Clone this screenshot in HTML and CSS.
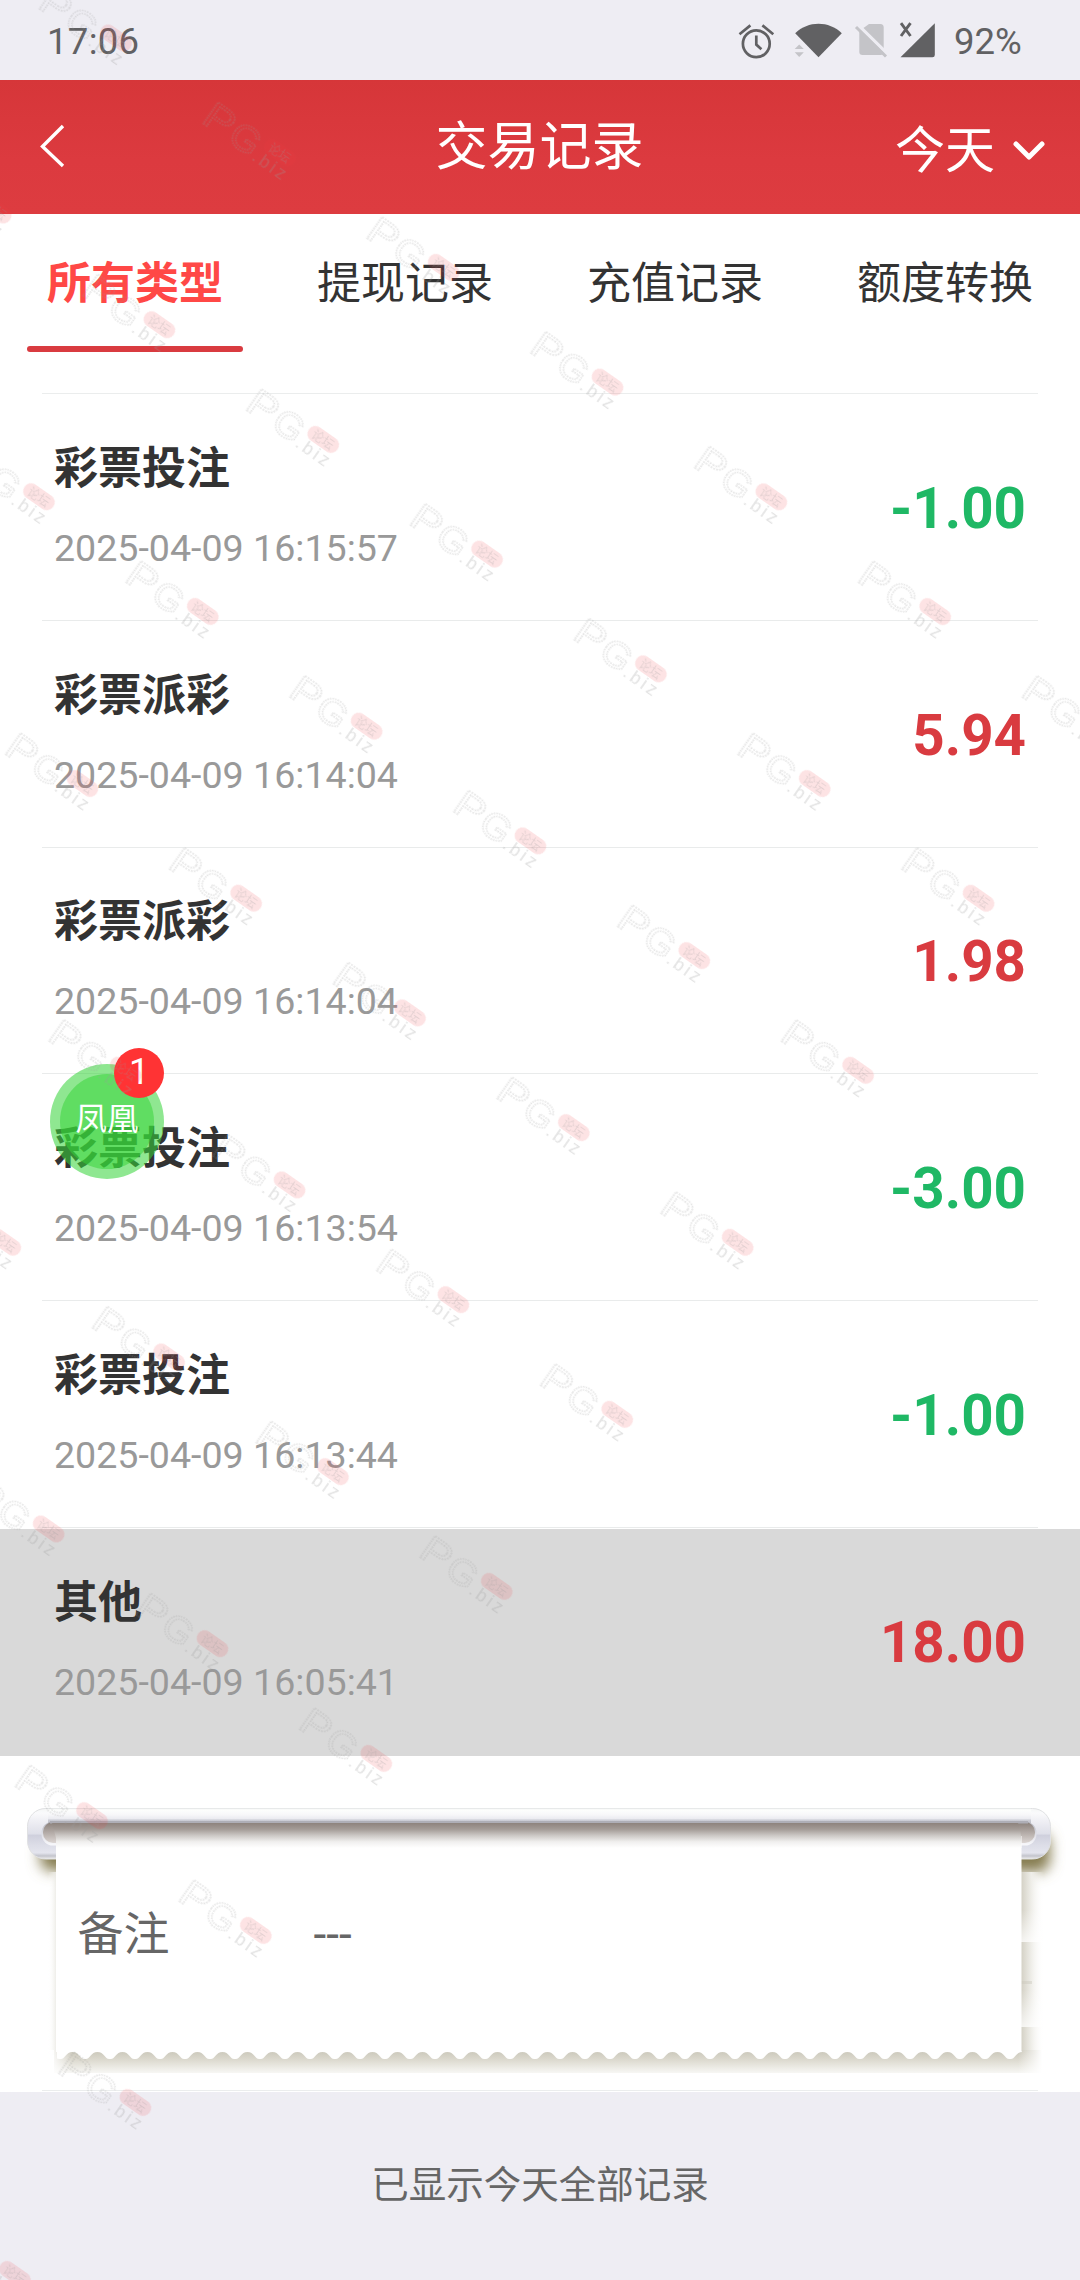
FILE: index.html
```html
<!DOCTYPE html>
<html lang="zh-CN">
<head>
<meta charset="utf-8">
<title>交易记录</title>
<link rel="stylesheet" href="styles.css">
</head>
<body>
<div class="screen">
  <div class="status">
    <span class="clock">17:06</span>
    <svg class="status-icons" width="205" height="80" viewBox="735 0 205 80">
      <g fill="none" stroke="#616163" stroke-width="2.7">
        <circle cx="755.3" cy="43.8" r="13.4"/>
        <path d="M738.5 34.2L749.4 25.4M772.3 34.2L761.4 25.4"/>
        <path d="M755.3 35.5V44.6L760.4 49.2"/>
      </g>
      <path fill="#616163" d="M817.5 57.3L794.2 33.3C807 20.6 828 20.6 840.8 33.3Z"/>
      <path fill="#c4c4c8" d="M798.2 44.5L802.8 49H793.7ZM793.7 52.3H802.8L798.2 57Z"/>
      <path fill="#c4c4c8" d="M868 24H879.5Q882.7 24 882.7 27.5V52Q882.7 55 879.5 55H861.5Q858.3 55 858.3 52V31Z"/>
      <path stroke="#eeedf3" stroke-width="3.5" d="M857 25L887 54.5"/>
      <path stroke="#c4c4c8" stroke-width="3" d="M855 27L885 56.5"/>
      <path fill="#616163" d="M933.8 23.3V55Q933.8 57.3 931.5 57.3H899.5Z"/>
      <path fill="none" stroke="#616163" stroke-width="2.9" d="M900 23.2L909.5 36M909.5 23.2L900 36"/>
    </svg>
    <span class="battery">92%</span>
  </div>

  <header class="header">
    <svg class="back" width="25" height="44" viewBox="0 0 25 44"><path d="M23 2L2.5 22.5L23 42" fill="none" stroke="#fff" stroke-width="3.4"/></svg>
    <h1 class="title">交易记录</h1>
    <div class="period"><span>今天</span><svg width="34" height="22" viewBox="0 0 34 22"><path d="M4 4L17 17L30 4" fill="none" stroke="#fff" stroke-width="5" stroke-linecap="round" stroke-linejoin="round"/></svg></div>
  </header>

  <nav class="tabs">
    <div class="tab active">所有类型</div>
    <div class="tab">提现记录</div>
    <div class="tab">充值记录</div>
    <div class="tab">额度转换</div>
  </nav>
  <div class="list-top"></div>

  <div class="list">
    <div class="row"><div class="row-in"><div><div class="name">彩票投注</div><div class="time">2025-04-09 16:15:57</div></div><div class="amount out">-1.00</div></div></div>
    <div class="row"><div class="row-in"><div><div class="name">彩票派彩</div><div class="time">2025-04-09 16:14:04</div></div><div class="amount">5.94</div></div></div>
    <div class="row"><div class="row-in"><div><div class="name">彩票派彩</div><div class="time">2025-04-09 16:14:04</div></div><div class="amount">1.98</div></div></div>
    <div class="row"><div class="row-in"><div><div class="name">彩票投注</div><div class="time">2025-04-09 16:13:54</div></div><div class="amount out">-3.00</div></div></div>
    <div class="row"><div class="row-in"><div><div class="name">彩票投注</div><div class="time">2025-04-09 16:13:44</div></div><div class="amount out">-1.00</div></div></div>
    <div class="row open"><div class="row-in"><div><div class="name">其他</div><div class="time">2025-04-09 16:05:41</div></div><div class="amount">18.00</div></div></div>
  </div>

  <section class="ticket">
    <svg class="ticket-art" width="1080" height="334" viewBox="0 1756 1080 334">
      <defs>
        <linearGradient id="bar" x1="0" y1="1808" x2="0" y2="1859" gradientUnits="userSpaceOnUse">
          <stop offset="0" stop-color="#f4f6f5"/><stop offset=".1" stop-color="#fafafc"/><stop offset=".3" stop-color="#ececf2"/>
          <stop offset=".5" stop-color="#dfe0e9"/><stop offset=".54" stop-color="#cfd0dd"/><stop offset=".72" stop-color="#dcdde7"/><stop offset=".88" stop-color="#e4e5ee"/><stop offset=".94" stop-color="#c3c4cc"/><stop offset="1" stop-color="#eeeeee"/>
        </linearGradient>
        <linearGradient id="rail" x1="0" y1="1808" x2="0" y2="1824" gradientUnits="userSpaceOnUse">
          <stop offset="0" stop-color="#e9edeb"/><stop offset=".12" stop-color="#fdfefd"/><stop offset=".4" stop-color="#f8f8fa"/><stop offset=".68" stop-color="#ebebf1"/><stop offset=".74" stop-color="#cfd0d8"/><stop offset="1" stop-color="#b9bac3"/>
        </linearGradient>
        <linearGradient id="slot" x1="0" y1="1823" x2="0" y2="1848" gradientUnits="userSpaceOnUse">
          <stop offset="0" stop-color="#8d837d"/><stop offset=".25" stop-color="#a39b96"/><stop offset=".5" stop-color="#ccc8c5"/><stop offset=".75" stop-color="#f0efee"/><stop offset="1" stop-color="#fff"/>
        </linearGradient>
        <linearGradient id="hole" x1="0" y1="1823" x2="0" y2="1844" gradientUnits="userSpaceOnUse">
          <stop offset="0" stop-color="#8d837d"/><stop offset="1" stop-color="#e0dad8"/>
        </linearGradient>
        <linearGradient id="rim" x1="0" y1="1822" x2="0" y2="1845" gradientUnits="userSpaceOnUse">
          <stop offset="0" stop-color="#b9bac3"/><stop offset=".5" stop-color="#dcdde5"/><stop offset="1" stop-color="#f8f8fb"/>
        </linearGradient>
        <linearGradient id="side" x1="1021" y1="0" x2="1044" y2="0" gradientUnits="userSpaceOnUse">
          <stop offset="0" stop-color="#d3d0c4"/><stop offset=".45" stop-color="#efeee9"/><stop offset="1" stop-color="#fff" stop-opacity="0"/>
        </linearGradient>
        <linearGradient id="fade" x1="0" y1="0" x2="0" y2="1">
          <stop offset="0" stop-color="#fff" stop-opacity="0"/><stop offset="1" stop-color="#fff" stop-opacity=".75"/>
        </linearGradient>
        <linearGradient id="drop" x1="0" y1="2050" x2="0" y2="2073" gradientUnits="userSpaceOnUse">
          <stop offset="0" stop-color="#c9c6b8"/><stop offset=".4" stop-color="#dbd8cd"/><stop offset="1" stop-color="#f7f7f4"/>
        </linearGradient>
        <linearGradient id="corner" x1="1018" y1="0" x2="1042" y2="0" gradientUnits="userSpaceOnUse">
          <stop offset="0" stop-color="#fff" stop-opacity="0"/><stop offset="1" stop-color="#fff"/>
        </linearGradient>
        <linearGradient id="left-corner" x1="50" y1="0" x2="72" y2="0" gradientUnits="userSpaceOnUse">
          <stop offset="0" stop-color="#fff"/><stop offset="1" stop-color="#fff" stop-opacity="0"/>
        </linearGradient>
        <linearGradient id="left" x1="48" y1="0" x2="57" y2="0" gradientUnits="userSpaceOnUse">
          <stop offset="0" stop-color="#fff" stop-opacity="0"/><stop offset="1" stop-color="#eae9e3"/>
        </linearGradient>
        <filter id="soft" x="-50%" y="-50%" width="200%" height="220%"><feGaussianBlur stdDeviation="7"/></filter>
        <pattern id="scallop" x="60" y="2051" width="25" height="9" patternUnits="userSpaceOnUse">
          <path fill="#fff" d="M0 0H25V8C20 9 19.5 1 12.5 1C5.5 1 5 9 0 8Z"/>
        </pattern>
      </defs>
      <g fill="#857c50" filter="url(#soft)">
        <rect x="40" y="1840" width="50" height="31" rx="12"/>
        <rect x="1000" y="1832" width="50" height="40" rx="12"/>
      </g>
      <rect x="48" y="1872" width="10" height="183" fill="url(#left)"/>
      <rect x="1021" y="1872" width="23" height="181" fill="url(#side)"/>
      <rect x="1021" y="1910" width="24" height="32" fill="url(#fade)"/>
      <rect x="1021" y="1990" width="24" height="37" fill="url(#fade)"/>
      <path fill="#c9c6b8" opacity=".4" d="M1021 1981H1032V1984H1021Z"/>
      <rect x="27.5" y="1808.5" width="1023" height="50.5" rx="18" fill="url(#bar)" stroke="#e0e1e3" stroke-width="1"/>
      <rect x="48" y="1808.5" width="983" height="15.5" fill="url(#rail)"/>
      <rect x="41.5" y="1821.5" width="995" height="24" rx="11.5" fill="url(#rim)"/>
      <rect x="43" y="1822" width="992" height="21" rx="10" fill="url(#hole)"/>
      <rect x="50" y="1821" width="978" height="2.5" fill="#aeaeb6"/>
      <rect x="54" y="2050" width="988" height="23" fill="url(#drop)"/>
      <rect x="1018" y="2050" width="27" height="24" fill="url(#corner)"/>
      <rect x="50" y="2050" width="22" height="24" fill="url(#left-corner)"/>
      <path fill="#fff" d="M56 1836H1021.5V2052H56Z"/>
      <path fill="url(#slot)" d="M56 1848V1838L52 1823H1018Q1021.5 1830 1021.5 1848Z"/>
      <rect x="57" y="2051" width="964.5" height="9" fill="url(#scallop)"/>
    </svg>
    <div class="remark"><span class="label">备注</span><span>---</span></div>
  </section>

  <footer class="footer">已显示今天全部记录</footer>

  <div class="bubble"><div class="bubble-core">凤凰</div><span class="badge">1</span></div>

  <svg class="stamp" width="1080" height="2280" viewBox="0 0 1080 2280">
    <defs>
      <pattern id="mark" x="-100" y="-105" width="200" height="210" patternUnits="userSpaceOnUse">
        <g transform="translate(100 105)">
          <g class="mark-big"><text x="-83" y="20" textLength="30" lengthAdjust="spacingAndGlyphs">P</text><text x="-51" y="21" textLength="30" lengthAdjust="spacingAndGlyphs">G</text></g>
          <rect x="-17.5" y="-8" width="35" height="16" rx="8" fill="#f03a40" opacity=".14"/>
          <text class="mark-zh" x="-12" y="4.5">论坛</text>
          <text class="mark-biz" x="-20" y="22" textLength="37">.biz</text>
        </g>
      </pattern>
    </defs>
    <rect x="-100" y="-105" width="1400" height="2100" fill="url(#mark)" transform="translate(116 38) rotate(35)"/>
  </svg>
</div>
</body>
</html>
```
FILE: styles.css
```css
* { box-sizing: border-box; margin: 0; padding: 0; }
body {
  width: 1080px;
  background: #eeedf3;
  font-family: Roboto, "Noto Sans CJK SC", sans-serif;
  color: #333;
}
.screen {
  position: relative;
  width: 1080px;
  height: 2280px;
  overflow: hidden;
  display: flex;
  flex-direction: column;
}
.status {
  height: 80px;
  display: flex;
  align-items: center;
  padding: 3px 57px 0 47px;
  font-size: 36.5px;
  color: #616163;
}
.clock { letter-spacing: .3px; }
.status-icons { margin: -3px 13px 0 auto; }
.battery { width: 69px; }
.header {
  height: 134px;
  display: grid;
  grid-template-columns: 1fr auto 1fr;
  align-items: center;
  padding: 0 34px 0 40px;
  background: linear-gradient(#d63639, #dc3a3f 60%, #dd3c40);
  color: #fff;
}
.back { margin-top: -2px; }
.title {
  font-size: 52px;
  font-weight: 400;
  line-height: 76px;
  padding: 2px 7px 0 0;
}
.period {
  display: flex;
  justify-content: flex-end;
  align-items: center;
  gap: 17px;
  font-size: 50px;
  line-height: 70px;
  padding-top: 7px;
}
.period svg { margin-top: 1px; }
.tabs {
  height: 138px;
  display: grid;
  grid-template-columns: repeat(4, 1fr);
  justify-items: center;
  background: #fff;
  font-size: 44px;
}
.tab {
  width: 216px;
  height: 138px;
  line-height: 64px;
  padding-top: 38px;
  text-align: center;
}
.tab.active {
  color: #ff4846;
  font-weight: 700;
  display: flex;
  flex-direction: column;
  justify-content: space-between;
}
.tab.active::after {
  content: "";
  height: 6px;
  border-radius: 3px;
  background: #d93b40;
}
.list-top {
  height: 43px;
  background: linear-gradient(#ebeded, #ebeded) 42px 41px / 996px 1px no-repeat #fff;
}
.row {
  height: 226.8px;
  padding: 0 42px;
  background: #fff;
}
.row-in {
  height: 225.8px;
  border-bottom: 1px solid #e9ebeb;
  padding: 0 12px 8px 12px;
  display: flex;
  justify-content: space-between;
  align-items: center;
}
.name {
  font-size: 44px;
  font-weight: 700;
  line-height: 64px;
}
.time {
  margin-top: 25px;
  font-size: 37.6px;
  line-height: 44px;
  color: #999;
}
.amount {
  font-size: 56.5px;
  font-weight: 700;
  line-height: 68px;
  color: #d93b40;
  padding-top: 11px;
}
.amount.out { color: #1fb865; }
.row.open { background: #d9d9d9; }
.row.open .row-in { border-color: transparent; }
.ticket {
  position: relative;
  height: 336.2px;
  background: linear-gradient(#ebeded, #ebeded) 42px 334px / 996px 1px no-repeat #fff;
}
.ticket-art { position: absolute; left: 0; top: 0; }
.remark {
  position: relative;
  display: flex;
  padding: 145px 0 0 77.5px;
  font-size: 46px;
  line-height: 66px;
  color: #666;
}
.label { width: 236px; }
.footer {
  flex: 1;
  padding-top: 65px;
  text-align: center;
  font-size: 37.5px;
  line-height: 56px;
  color: #666;
}
.bubble {
  position: absolute;
  left: 50px;
  top: 1064px;
  width: 114px;
  height: 115px;
  border-radius: 50%;
  padding: 10px;
  background: rgba(54, 212, 57, .555);
}
.bubble-core {
  height: 95px;
  border-radius: 50%;
  background: rgba(54, 212, 57, .53);
  color: #fff;
  font-size: 31.5px;
  line-height: 92px;
  text-align: center;
}
.badge {
  position: absolute;
  right: 0;
  top: -16px;
  width: 50px;
  height: 50px;
  border-radius: 50%;
  background: #ff3334;
  color: #fff;
  font-size: 36px;
  line-height: 48px;
  text-align: center;
}
.stamp {
  position: absolute;
  left: 0;
  top: 0;
  pointer-events: none;
}
.mark-big {
  font: 36px "Liberation Sans", sans-serif;
  fill: none;
  stroke: #999;
  stroke-width: 1.6px;
  stroke-dasharray: 1.5 1;
  opacity: .25;
}
.mark-zh {
  font: 12px "Noto Sans CJK SC", sans-serif;
  fill: #999;
  opacity: .25;
}
.mark-biz {
  font: 18px "Liberation Sans", sans-serif;
  fill: #999;
  opacity: .28;
}
```
